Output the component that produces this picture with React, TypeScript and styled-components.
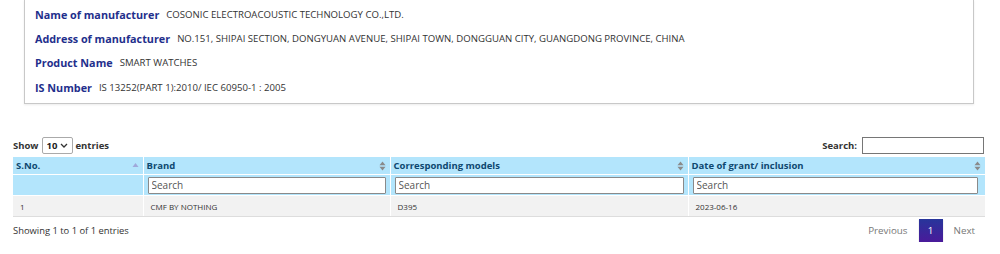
import { createGlobalStyle } from "styled-components";
import styled from "styled-components";

const GlobalStyle = createGlobalStyle`
  html, body {
    margin: 0;
    padding: 0;
    background: #fff;
    font-family: "Open Sans", "Liberation Sans", sans-serif;
    color: #333;
  }
`;

const details = [
  { label: "Name of manufacturer", value: "COSONIC ELECTROACOUSTIC TECHNOLOGY CO.,LTD." },
  {
    label: "Address of manufacturer",
    value: "NO.151, SHIPAI SECTION, DONGYUAN AVENUE, SHIPAI TOWN, DONGGUAN CITY, GUANGDONG PROVINCE, CHINA",
  },
  { label: "Product Name", value: "SMART WATCHES" },
  { label: "IS Number", value: "IS 13252(PART 1):2010/ IEC 60950-1 : 2005" },
];

const columns = [
  { title: "S.No.", width: 130, sort: "asc", filter: false },
  { title: "Brand", width: 247, sort: "both", filter: true },
  { title: "Corresponding models", width: 298, sort: "both", filter: true },
  { title: "Date of grant/ inclusion", width: 297, sort: "both", filter: true },
];

const rows = [["1", "CMF BY NOTHING", "D395", "2023-06-16"]];

function SortIcon({ mode }: { mode: string }) {
  if (mode === "asc") {
    return (
      <svg width="7" height="10" viewBox="0 0 7 10">
        <path d="M0.5 6 L3.5 2 L6.5 6 Z" fill="#9fa8da" />
      </svg>
    );
  }
  return (
    <svg width="7" height="10" viewBox="0 0 7 10">
      <path d="M0.5 4.3 L3.5 0.5 L6.5 4.3 Z" fill="#8a8a8a" />
      <path d="M0.5 5.7 L3.5 9.5 L6.5 5.7 Z" fill="#8a8a8a" />
    </svg>
  );
}

export default function App() {
  return (
    <Page>
      <GlobalStyle />
      <Card>
        {details.map((d) => (
          <DetailRow key={d.label}>
            <DetailLabel>{d.label}</DetailLabel>
            <DetailValue>{d.value}</DetailValue>
          </DetailRow>
        ))}
      </Card>

      <Toolbar>
        <LengthControl>
          Show
          <SelectWrap>
            <LengthSelect defaultValue="10">
              <option value="10">10</option>
              <option value="25">25</option>
              <option value="50">50</option>
              <option value="100">100</option>
            </LengthSelect>
            <Chevron width="8" height="5" viewBox="0 0 8 5">
              <path d="M1 1 L4 4 L7 1" fill="none" stroke="#333" strokeWidth="1.3" />
            </Chevron>
          </SelectWrap>
          entries
        </LengthControl>
        <SearchControl>
          Search:
          <SearchBox type="text" />
        </SearchControl>
      </Toolbar>

      <Table>
        <colgroup>
          {columns.map((c) => (
            <col key={c.title} style={{ width: c.width }} />
          ))}
        </colgroup>
        <thead>
          <tr>
            {columns.map((c) => (
              <HeadCell key={c.title}>
                <HeadInner>
                  <span>{c.title}</span>
                  <SortIcon mode={c.sort} />
                </HeadInner>
              </HeadCell>
            ))}
          </tr>
          <tr>
            {columns.map((c) => (
              <FilterCell key={c.title}>
                {c.filter && <FilterInput type="text" placeholder="Search" />}
              </FilterCell>
            ))}
          </tr>
        </thead>
        <tbody>
          {rows.map((r, i) => (
            <BodyRow key={i} $odd={i % 2 === 0}>
              {r.map((v, j) => (
                <BodyCell key={j}>{v}</BodyCell>
              ))}
            </BodyRow>
          ))}
        </tbody>
      </Table>

      <Footer>
        <Info>Showing 1 to 1 of 1 entries</Info>
        <Pager>
          <PageLink>Previous</PageLink>
          <PageButton>1</PageButton>
          <PageLink>Next</PageLink>
        </Pager>
      </Footer>
    </Page>
  );
}

const Page = styled.div`
  width: 972px;
  padding: 0 15px 0 13px;
`;

const Card = styled.div`
  margin: 0 11px;
  padding: 2px 10px 4px;
  border: 1px solid #c8c8c8;
  border-top: none;
  box-shadow: 0 1px 2px rgba(0, 0, 0, 0.08);
`;

const DetailRow = styled.div`
  display: flex;
  align-items: center;
  gap: 7px;
  height: 24.3px;
`;

const DetailLabel = styled.span`
  font-size: 10.8px;
  font-weight: 700;
  color: #1f2f8c;
`;

const DetailValue = styled.span`
  font-size: 9.6px;
  color: #333;
`;

const Toolbar = styled.div`
  display: flex;
  justify-content: space-between;
  align-items: center;
  margin-top: 32px;
  height: 18px;
`;

const LengthControl = styled.label`
  display: flex;
  align-items: center;
  gap: 3px;
  font-size: 9.5px;
  font-weight: 700;
  color: #333;
`;

const SelectWrap = styled.span`
  position: relative;
  display: inline-flex;
`;

const LengthSelect = styled.select`
  appearance: none;
  box-sizing: border-box;
  width: 31px;
  height: 17px;
  padding: 0 0 0 4px;
  font-family: "Open Sans", "Liberation Sans", sans-serif;
  font-size: 9.5px;
  font-weight: 700;
  color: #222;
  border: 1px solid #aaa;
  border-radius: 2px;
  background: #fff;
`;

const Chevron = styled.svg`
  position: absolute;
  right: 5px;
  top: 6px;
  pointer-events: none;
`;

const SearchControl = styled.label`
  display: flex;
  align-items: center;
  gap: 5px;
  margin-right: 1px;
  font-size: 9.5px;
  font-weight: 700;
  color: #333;
`;

const SearchBox = styled.input`
  box-sizing: border-box;
  width: 122px;
  height: 17px;
  border: 1px solid #767676;
  padding: 0 3px;
`;

const Table = styled.table`
  margin-top: 3px;
  width: 972px;
  border-collapse: collapse;
  table-layout: fixed;
`;

const HeadCell = styled.th`
  height: 17px;
  padding: 0 4px 0 3px;
  background: #b3e5fc;
  border-right: 1px solid #fff;
  border-bottom: 1px solid #fff;
  text-align: left;
  font-size: 9.5px;
  font-weight: 700;
  color: #0e4870;
  &:last-child {
    border-right: none;
  }
`;

const HeadInner = styled.div`
  display: flex;
  align-items: center;
  justify-content: space-between;
`;

const FilterCell = styled.th`
  height: 20px;
  padding: 0 4px;
  background: #b3e5fc;
  border-right: 1px solid #fff;
  &:last-child {
    border-right: none;
    padding-right: 7px;
  }
`;

const FilterInput = styled.input`
  box-sizing: border-box;
  display: block;
  width: 100%;
  height: 17px;
  padding: 0 3px;
  border: 1px solid #8a8a8a;
  border-radius: 1px;
  font-family: "Open Sans", "Liberation Sans", sans-serif;
  font-size: 10px;
  color: #333;
  &::placeholder {
    color: #555;
  }
`;

const BodyRow = styled.tr<{ $odd: boolean }>`
  background: ${(p) => (p.$odd ? "#f2f2f2" : "#fff")};
`;

const BodyCell = styled.td`
  height: 20px;
  padding: 0 7px;
  border-top: 1px solid #fff;
  border-right: 1px solid #fff;
  border-bottom: 1px solid #ddd;
  font-size: 8px;
  color: #333;
  &:last-child {
    border-right: none;
  }
`;

const Footer = styled.div`
  display: flex;
  justify-content: space-between;
  align-items: center;
  margin-top: 2px;
`;

const Info = styled.div`
  font-size: 9.4px;
  color: #333;
`;

const Pager = styled.div`
  display: flex;
  align-items: center;
  gap: 11px;
  margin-right: 10px;
`;

const PageLink = styled.span`
  font-size: 9.8px;
  color: #777;
`;

const PageButton = styled.span`
  display: flex;
  align-items: center;
  justify-content: center;
  width: 24px;
  height: 23px;
  font-size: 9.8px;
  color: #fff;
  background: linear-gradient(180deg, #27359b 0%, #4a1a9a 100%);
  box-shadow: 0 1px 1px rgba(0, 0, 0, 0.25);
`;
